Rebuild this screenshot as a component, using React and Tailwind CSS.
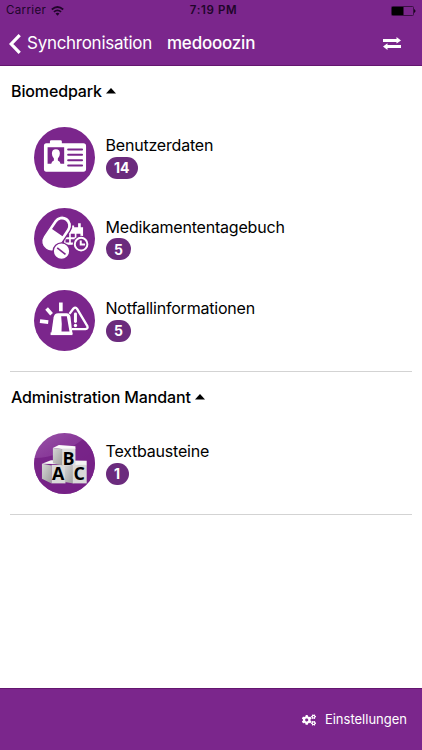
import { useState } from 'react';
import { FaCogs } from 'react-icons/fa';

function UserDataIcon() {
  return (
    <svg viewBox="27 26 184 184" className="h-[61px] w-[61px] shrink-0">
      <circle cx="119" cy="118" r="92" fill="#7b268c" />
      <path d="M64 75h11v-5q0-4 4-4h28q4 0 4 4v5h65q8 0 8 8v70q0 8-8 8H64q-7 0-7-8V83q0-8 7-8z" fill="#fff" />
      <path d="M68 87h50v50h-11q-1-8-8-10v-6q6-6 6-15 0-13-12-13t-12 13q0 9 6 15v6q-7 2-8 10H68z" fill="#7b268c" />
      <path d="M130 94h42M130 110h42M130 126h42M130 142h42" stroke="#7b268c" strokeWidth="6" strokeLinecap="round" />
    </svg>
  );
}

function MedicationIcon() {
  return (
    <svg viewBox="27 29 184 184" className="h-[61px] w-[61px] shrink-0">
      <circle cx="119" cy="121" r="92" fill="#7b268c" />
      <path d="M118 87h57v53h-57z" fill="#fff" />
      <path d="M144 82v8M164 75v15" stroke="#fff" strokeWidth="8" />
      <path d="M122 107h11v10h-11zM138 107h12v10h-12zM122 123h11v10h-11zM138 123h12v10h-12zM155 107h12v10h-12z" fill="#7b268c" />
      <g transform="rotate(34 96 105)">
        <rect x="67" y="48" width="58" height="116" rx="29" fill="#fff" stroke="#7b268c" strokeWidth="4" />
        <path d="M77 103V78a19 19 0 0 1 38 0v25z" fill="#7b268c" />
      </g>
      <circle cx="110" cy="159" r="25" fill="#fff" stroke="#7b268c" strokeWidth="4" />
      <path d="M97 149l25 20" stroke="#7b268c" strokeWidth="5" />
      <circle cx="169" cy="138" r="25" fill="#7b268c" />
      <circle cx="169" cy="138" r="19" fill="none" stroke="#fff" strokeWidth="6" />
      <path d="M168 127v12h13" fill="none" stroke="#fff" strokeWidth="6" />
    </svg>
  );
}

function EmergencyIcon() {
  return (
    <svg viewBox="27 27 184 184" className="h-[61px] w-[61px] shrink-0">
      <circle cx="119" cy="119" r="92" fill="#7b268c" />
      <path d="M45 121l25 3M65 83l15 17M108 65v26" stroke="#fff" strokeWidth="11" />
      <path d="M79 160l7-50q2-13 14-13h25q10 0 12 11l6 52z" fill="#fff" />
      <path d="M77 155h66v8H77z" fill="#fff" />
      <path d="M109 106h17l8 46h-24q2-23-1-46z" fill="#7b268c" />
      <path d="M134 99l12-16q6-6 11 1l31 52q3 8-6 9h-41" fill="none" stroke="#fff" strokeWidth="7" strokeLinejoin="round" />
      <path d="M152 99v23" stroke="#fff" strokeWidth="9" strokeLinecap="round" />
      <circle cx="152" cy="134" r="5" fill="#fff" />
    </svg>
  );
}

function TextBlocksIcon() {
  return (
    <svg viewBox="27 26 184 184" className="h-[61px] w-[61px] shrink-0">
      <defs>
        <linearGradient id="blocksBg" x1="0" y1="0" x2="0.6" y2="1">
          <stop offset="0" stopColor="#9a55a9" />
          <stop offset="0.35" stopColor="#8a3b9a" />
          <stop offset="1" stopColor="#7b268c" />
        </linearGradient>
        <linearGradient id="blockSide" x1="0" y1="0" x2="1" y2="1">
          <stop offset="0" stopColor="#d6d6d6" />
          <stop offset="1" stopColor="#9c9c9c" />
        </linearGradient>
        <clipPath id="blocksClip">
          <circle cx="119" cy="118" r="92" />
        </clipPath>
      </defs>
      <circle cx="119" cy="118" r="92" fill="url(#blocksBg)" />
      <path d="M20 101Q100 105 180 40L215 80V215H20z" fill="#741f85" opacity=".8" clipPath="url(#blocksClip)" />
      <path d="M51 119l27-11h43v12z" fill="#f5f5f5" />
      <path d="M51 119l29 5v54l-29-14z" fill="url(#blockSide)" />
      <path d="M80 122h42v56H80z" fill="#d9d9d9" />
      <path d="M119 121l22-12 45 1v13h-40z" fill="#f5f5f5" />
      <path d="M120 121l26 3v54l-26-4z" fill="url(#blockSide)" />
      <path d="M144 122h42v56h-42z" fill="#d9d9d9" />
      <path d="M84 71l18-9 50 4v8h-40z" fill="#fafafa" />
      <path d="M84 71l30 4v49l-30-7z" fill="url(#blockSide)" />
      <path d="M112 73h40v51h-40z" fill="#dedede" />
      <g fontFamily="'Open Sans', sans-serif" fontWeight="700" fontSize="54" textAnchor="middle" fill="#000">
        <text x="131" y="123">B</text>
        <text x="100" y="168">A</text>
        <text x="163" y="168">C</text>
      </g>
    </svg>
  );
}

const sections = [
  {
    title: 'Biomedpark',
    items: [
      { label: 'Benutzerdaten', count: 14, Icon: UserDataIcon },
      { label: 'Medikamententagebuch', count: 5, Icon: MedicationIcon },
      { label: 'Notfallinformationen', count: 5, Icon: EmergencyIcon },
    ],
  },
  {
    title: 'Administration Mandant',
    items: [{ label: 'Textbausteine', count: 1, Icon: TextBlocksIcon }],
  },
];

function StatusBar() {
  return (
    <div className="grid h-[21px] grid-cols-3 items-center pl-[6px] pr-[6px] text-[11.5px] text-[#20052a]">
      <div className="flex items-center gap-[5px] pt-px">
        <span className="tracking-[0.35px]">Carrier</span>
        <svg viewBox="0 0 13 10" className="-mt-px h-[10px] w-[13px]" fill="none" stroke="currentColor" strokeWidth="1.7">
          <path d="M.8 3.5q5.7-5 11.4 0M2.9 5.9q3.6-3 7.2 0" />
          <path d="M4.5 7.5q2-1.5 4 0L6.5 9.7z" fill="currentColor" stroke="none" />
        </svg>
      </div>
      <span className="pt-px pl-[5px] text-center font-semibold tracking-[0.6px]">7:19 PM</span>
      <svg viewBox="0 0 25 10" className="h-[10px] w-[25px] justify-self-end">
        <rect x=".5" y=".5" width="22" height="9" rx="1" fill="none" stroke="#3b1045" />
        <path d="M1 1h11.500v8H1z" fill="#000" />
        <path d="M23.500 3.500q1.500 1.500 0 3z" fill="#000" stroke="#000" strokeWidth=".5" />
      </svg>
    </div>
  );
}

function Section({ title, items }) {
  const [open, setOpen] = useState(true);

  return (
    <section className="border-b border-[#d3d3d3] pb-[20px]">
      <button className="flex h-[51px] cursor-pointer items-center gap-[4px] pt-[0.6px] pl-px text-[16px] font-medium tracking-[-0.13px]" onClick={() => setOpen(!open)}>
        {title}
        <svg viewBox="0 0 10 6" className={open ? 'h-[6px] w-[10px]' : 'h-[6px] w-[10px] rotate-180'}>
          <path d="M0 5.500 5 0l5 5.500z" />
        </svg>
      </button>
      {open && (
        <ul className="flex flex-col gap-[20.5px] pt-[10px] pl-[24px]">
          {items.map(({ label, count, Icon }) => (
            <li key={label} className="flex h-[61px] gap-[10.5px]">
              <Icon />
              <div className="flex flex-col items-start pt-[8.600px]">
                <span className="text-[16px] leading-[20px] tracking-[-0.2px]">{label}</span>
                <span className="mt-[1.900px] flex h-[22px] items-center rounded-[11px] bg-[#6b2b7d] px-[8.5px] text-[14px] font-bold text-white">
                  {count}
                </span>
              </div>
            </li>
          ))}
        </ul>
      )}
    </section>
  );
}

export default function App() {
  return (
    <div className="flex h-[750px] w-[422px] flex-col bg-white font-['Inter',sans-serif] text-black">
      <header className="h-[65.500px] border-b border-[#64166f] bg-[#7b268c]">
        <StatusBar />
        <div className="flex h-[44px] items-center pl-[9px] pr-[21px] pt-px text-[17px] text-white">
          <svg viewBox="0 0 12 20" className="h-[20px] w-[12px]" fill="none" stroke="currentColor" strokeWidth="3.200">
            <path d="M10.700 1.200 2.200 10l8.500 8.800" />
          </svg>
          <span className="ml-[6px] tracking-[-0.28px]">Synchronisation</span>
          <span className="ml-[15px] font-medium tracking-[-0.22px]">medooozin</span>
          <svg viewBox="0 0 18 13" className="ml-auto h-[13px] w-[18px]" fill="currentColor">
            <path d="M0 2.100h13.500V0L18 3.500 13.500 6.500V4.900H0zM18 8.100H4.500V6.200L0 9.500 4.500 13v-2.100H18z" />
          </svg>
        </div>
      </header>
      <main className="flex-1 px-[10px]">
        {sections.map((section) => (
          <Section key={section.title} {...section} />
        ))}
      </main>
      <footer className="flex h-[62px] items-center justify-end gap-[9px] border-t border-[#64166f] bg-[#7b268c] pr-[15px] text-[13px] text-white">
        <FaCogs className="text-[14px]" />
        <span>Einstellungen</span>
      </footer>
    </div>
  );
}
